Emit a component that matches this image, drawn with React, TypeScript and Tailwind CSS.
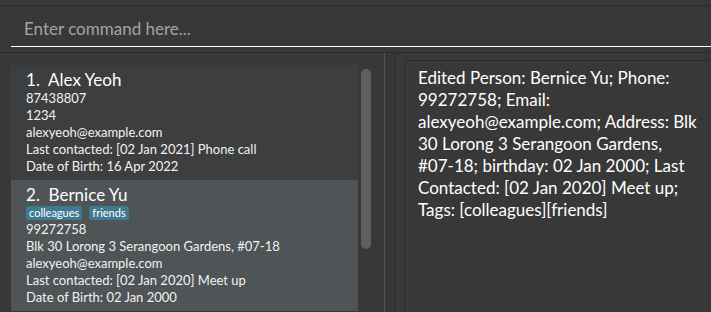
import React from 'react';

const font = { fontFamily: 'Lato, "Open Sans", sans-serif' };

type Person = {
  name: string;
  tags: string[];
  lines: string[];
  selected?: boolean;
};

const people: Person[] = [
  {
    name: 'Alex Yeoh',
    tags: [],
    lines: ['87438807', '1234', 'alexyeoh@example.com', 'Last contacted: [02 Jan 2021] Phone call', 'Date of Birth: 16 Apr 2022'],
  },
  {
    name: 'Bernice Yu',
    tags: ['colleagues', 'friends'],
    lines: [
      '99272758',
      'Blk 30 Lorong 3 Serangoon Gardens, #07-18',
      'alexyeoh@example.com',
      'Last contacted: [02 Jan 2020] Meet up',
      'Date of Birth: 02 Jan 2000',
    ],
    selected: true,
  },
];

const PersonCard = ({ p, index }: { p: Person; index: number }) => (
  <div className={`${p.selected ? 'bg-[#4f5457]' : 'bg-[#3c3e3f]'} pl-[15px] pt-[5px] pb-[5px] shrink-0`}>
    <div className="h-[20px] leading-[20px] text-[17px] text-white whitespace-pre">
      {index}.  {p.name}
    </div>
    {p.tags.length > 0 && (
      <div className="h-[16px] flex items-center gap-[7px]">
        {p.tags.map((t) => (
          <span key={t} className="h-[14px] leading-[14px] px-[3px] rounded-[2px] bg-[#3e7b91] text-white text-[11px]">
            {t}
          </span>
        ))}
      </div>
    )}
    {p.lines.map((l) => (
      <div key={l} className="h-[17px] leading-[17px] text-[13px] text-[#f2f2f2] whitespace-nowrap">
        {l}
      </div>
    ))}
  </div>
);

export default function App() {
  return (
    <div className="w-[711px] h-[312px] bg-[#383838] overflow-hidden flex flex-col" style={font}>
      <div className="h-[6px] shrink-0 border-b border-[#2b2b2b]" />
      <div className="h-[47px] shrink-0 pl-[11px] pt-[11px] border-b border-[#2b2b2b]">
        <div className="border-b border-white h-[30px] pl-[13px]">
          <div className="h-[24px] leading-[24px] text-[17px] text-[#a3a3a3]">Enter command here...</div>
        </div>
      </div>
      <div className="flex flex-1 min-h-0">
        <div className="w-[385px] shrink-0 border-r border-[#525252] flex pt-[12px] pl-[11px]">
          <div className="w-[347px] flex flex-col">
            {people.map((p, i) => (
              <PersonCard key={p.name} p={p} index={i + 1} />
            ))}
          </div>
          <div className="ml-[3px] mt-[4px] w-[10px] h-[180px] rounded-full bg-[#5f5f5f]" />
        </div>
        <div className="w-[10px] shrink-0 border-r border-[#2b2b2b]" />
        <div className="flex-1 pl-[9px] pt-[7px]">
          <div className="h-full border-l border-t border-[#2b2b2b] pl-[13px] pt-[6px] pr-[8px]">
            <p className="text-[17px] leading-[22px] text-white">
              Edited Person: Bernice Yu; Phone: 99272758; Email: alexyeoh@example.com; Address: Blk 30 Lorong 3 Serangoon
              Gardens, <span className="whitespace-nowrap">#07-18;</span> birthday: 02 Jan 2000; Last Contacted: [02 Jan
              2020] Meet up; Tags: [colleagues][friends]
            </p>
          </div>
        </div>
      </div>
    </div>
  );
}
